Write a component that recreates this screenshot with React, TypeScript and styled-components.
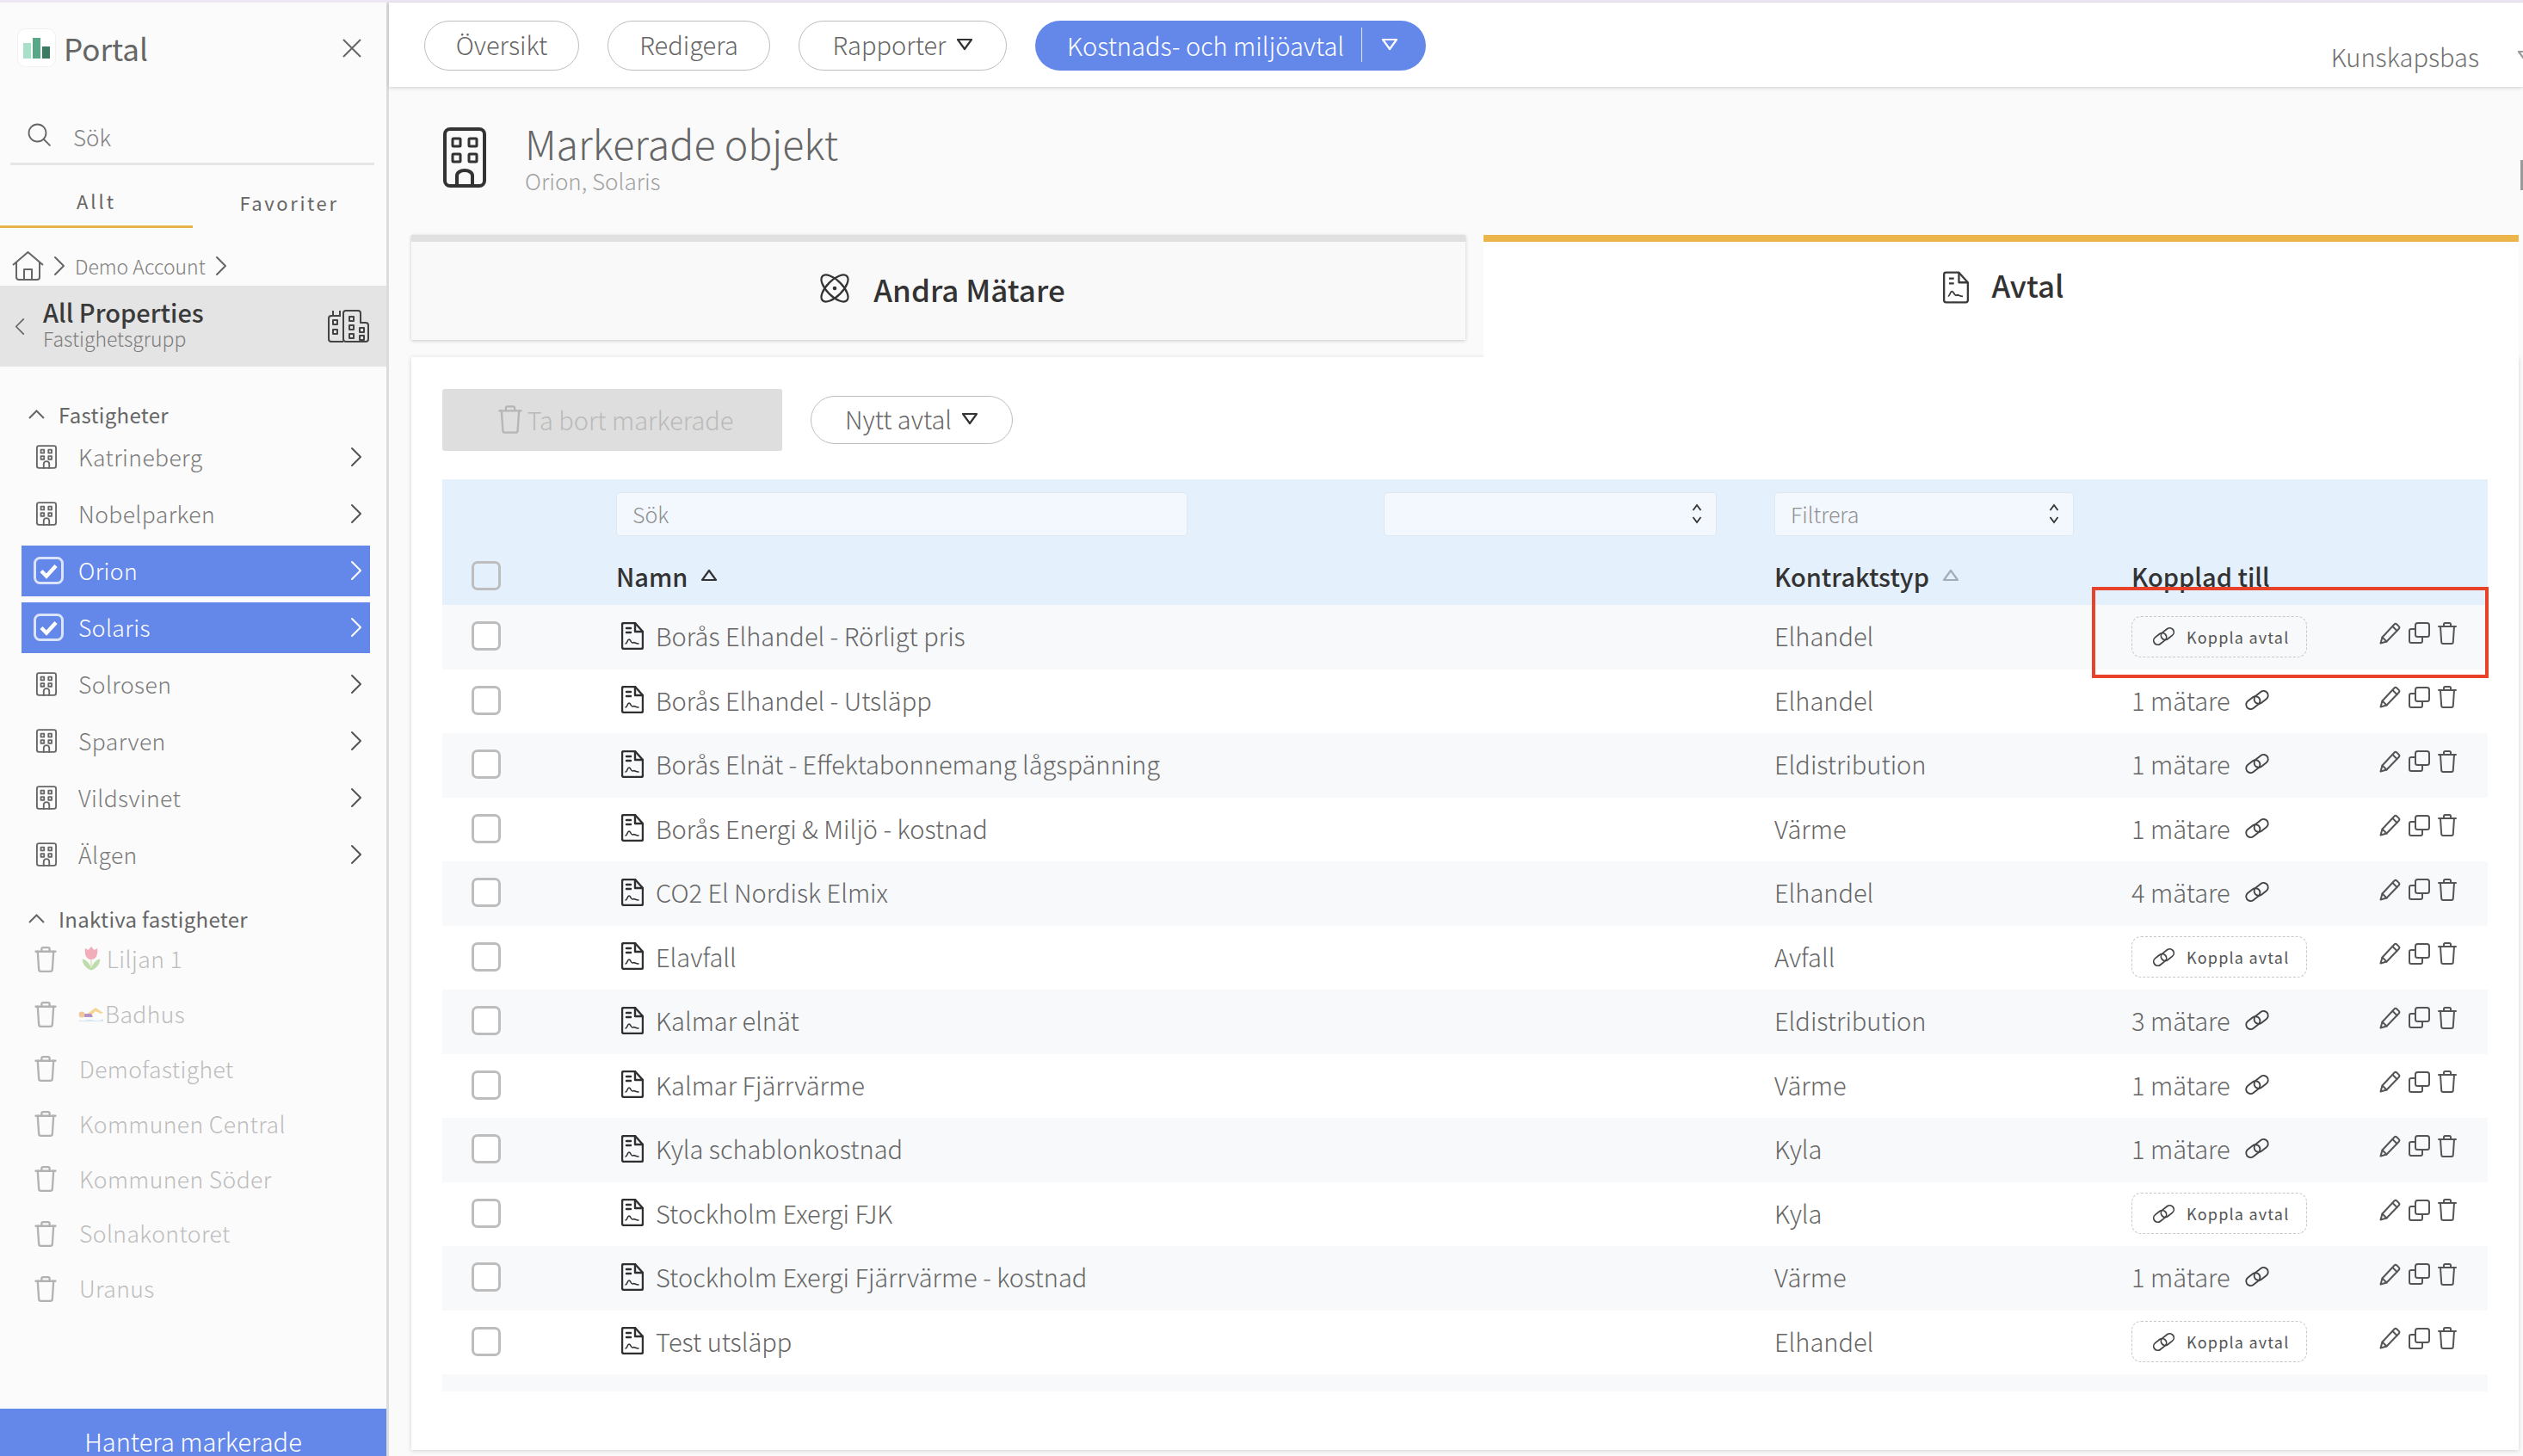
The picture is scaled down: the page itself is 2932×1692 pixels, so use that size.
import React from "react";
import styled, { createGlobalStyle } from "styled-components";

const FONT = `"Noto Sans CJK SC", "Noto Sans CJK JP", "Noto Sans", sans-serif`;

const Global = createGlobalStyle`
  html, body { margin: 0; padding: 0; background: #fafafa; }
  body { width: 2932px; height: 1692px; overflow: hidden; font-family: ${FONT}; color: #666; }
  * { box-sizing: border-box; }
`;

const Shell = styled.div`
  width: 2932px; height: 1692px; display: flex; flex-direction: column; overflow: hidden; position: relative;
`;
const TopStrip = styled.div`height: 3px; background: #ede6f3; flex: none;`;
const Body = styled.div`flex: 1; display: flex; min-height: 0;`;

/* Sidebar */
const Side = styled.aside`
  width: 452px; flex: none; background: #fbfbfb; border-right: 3px solid #dcdcdc;
  display: flex; flex-direction: column; height: 1689px;
`;
const Brand = styled.div`
  height: 87px; padding: 30px 28px 0 20px; display: flex; align-items: flex-start; justify-content: space-between;
`;
const BrandLeft = styled.div`display: flex; align-items: center; gap: 9px; font-size: 35px; line-height: 43px; color: #666; font-weight: 400;`;
const SideSearch = styled.div`
  margin: 53px 14px 0 12px; height: 49px; padding: 0 0 0 20px; border-bottom: 3px solid #e6e6e6;
  display: flex; align-items: flex-start; gap: 26px; font-size: 26px; line-height: 32px; color: #808080; font-weight: 300;
  flex: none;
`;
const Tabs = styled.div`display: flex; height: 73px; flex: none; width: 449px;`;
const SideTab = styled.div<{ $active?: boolean }>`
  width: 224px; text-align: center; font-size: 22px; letter-spacing: ${p => (p.$active ? 3 : 2.6)}px; color: #666; line-height: 26px;
  padding-top: ${p => (p.$active ? 28 : 30)}px; border-bottom: 3px solid ${p => (p.$active ? "#e5b54a" : "transparent")};
  height: 73px; font-weight: 400;
`;
const Crumb = styled.div`
  height: 67px; flex: none; padding: 20px 0 0 14px; display: flex; align-items: center; gap: 11px;
  font-size: 23px; font-weight: 300; color: #808080;
`;
const Group = styled.div`
  height: 94px; flex: none; background: #e4e4e4; display: flex; align-items: center; padding: 0 19px 0 17px;
`;
const GroupText = styled.div`margin-left: 21px; flex: 1; padding-bottom: 6px;`;
const GroupTitle = styled.div`font-size: 29px; line-height: 34px; font-weight: 500; color: #3a3a3a;`;
const GroupSub = styled.div`font-size: 23px; line-height: 28px; font-weight: 300; color: #7d7d7d;`;
const Section = styled.div<{ $top: number }>`
  margin-top: ${p => p.$top}px; padding-left: 33px; height: 34px; display: flex; align-items: center; gap: 16px;
  font-size: 24px; color: #666; flex: none; letter-spacing: .3px;
`;
const NavList = styled.div<{ $top: number }>`display: flex; flex-direction: column; flex: none; margin-top: ${p => p.$top}px;`;
const NavItem = styled.div<{ $selected?: boolean; $h: number }>`
  height: ${p => p.$h}px; margin: 0 19px 0 25px; width: 405px; flex: none; display: flex; align-items: center;
  background: ${p => (p.$selected ? "#6488ea" : "transparent")};
  color: ${p => (p.$selected ? "#fff" : "#7a7a7a")};
  font-size: 26.5px; font-weight: 300; letter-spacing: .4px;
  background-clip: content-box; padding: ${p => (p.$selected ? "3.5px 0" : "0")};
  svg.ic { margin-left: 14px; flex: none; }
`;
const BuildingSlot = styled.span`display: flex; margin-left: 3px; margin-right: 8px;`;
const NavLabel = styled.span`margin-left: 17px; flex: 1; display: flex; align-items: center; white-space: nowrap; padding-bottom: 2px;`;
const ChevSlot = styled.span`margin-right: 9px; display: flex;`;
const DeadItem = styled.div`
  height: 63.8px; width: 405px; margin-left: 25px; display: flex; align-items: center; opacity: .55;
  font-size: 26.5px; font-weight: 300; letter-spacing: .4px; color: #8a8a8a; flex: none;
  svg.ic { margin-left: 15px; flex: none; }
`;
const DeadLabel = styled(NavLabel)`margin-left: 26px;`;
const EmojiSlot = styled.span<{ $w: number; $left: number }>`display: flex; width: ${p => p.$w}px; margin-left: ${p => p.$left}px; flex: none;`;
const SideSpacer = styled.div`flex: 1;`;
const Manage = styled.div`
  height: 55px; flex: none; width: 449px; background: #6488ea; color: #fff; text-align: center;
  font-size: 29px; font-weight: 300; padding-top: 20px; line-height: 35px;
`;

/* Main */
const Main = styled.main`flex: 1; min-width: 0; display: flex; flex-direction: column; background: #fafafa; position: relative;`;
const TopBar = styled.header`
  height: 98px; flex: none; background: #fff; box-shadow: 0 1px 4px rgba(0,0,0,.18); padding: 21px 0 0 41px;
  display: flex; align-items: flex-start; gap: 33px; position: relative; z-index: 2;
`;
const Pill = styled.div<{ $w: number; $h?: number }>`
  width: ${p => p.$w}px; height: ${p => p.$h ?? 58}px; flex: none; border: 1px solid #bdbdbd; border-radius: 29px; background: #fff;
  display: flex; align-items: center; justify-content: center; gap: 11px;
  font-size: 29px; font-weight: 300; color: #666; line-height: 1; padding-bottom: 3px;
`;
const BluePill = styled.div`
  width: 454px; height: 58px; flex: none; border-radius: 29px; background: #6488ea; color: #fff;
  display: flex; align-items: center; padding-left: 37px; font-size: 29px; font-weight: 300; padding-bottom: 3px;
`;
const PillDivider = styled.span`width: 1px; height: 40px; background: #dfe7fb; margin-left: 20px; margin-right: 22px;`;
const Kb = styled.div`
  margin-left: auto; margin-top: 20px; display: flex; align-items: center; gap: 44px; font-size: 29px; font-weight: 300; color: #707070; margin-right: -13px;
`;
const Head = styled.section`
  height: 172px; flex: none; padding: 47px 0 0 63px; display: flex; align-items: flex-start; position: relative;
`;
const HeadText = styled.div`margin-left: 45px; margin-top: -10px;`;
const HeadTitle = styled.h1`margin: 0; font-size: 46.5px; line-height: 56px; font-weight: 300; color: #666;`;
const HeadSub = styled.div`font-size: 26px; line-height: 32px; font-weight: 300; color: #a0a0a0; margin-top: 0;`;
const EdgeMark = styled.div`position: absolute; right: 0; top: 85px; width: 3px; height: 35px; background: #999;`;
const TabRow = styled.div`
  height: 142px; flex: none; padding-left: 26px; display: flex; align-items: flex-start; gap: 21px; position: relative; z-index: 1;
`;
const TabLeft = styled.div`
  width: 1225px; height: 122px; background: #f9f9f9; border-top: 8px solid #e0e0e0; box-shadow: 0 1px 4px rgba(0,0,0,.2);
  display: flex; align-items: center; justify-content: center; gap: 28px; font-size: 35px; font-weight: 500; color: #333; padding-left: 10px; padding-bottom: 6px;
`;
const TabRight = styled.div`
  width: 1203px; height: 142px; background: #fff; border-top: 8px solid #ebb54a;
  display: flex; align-items: flex-start; justify-content: center; gap: 26px; font-size: 35px; font-weight: 500; color: #333;
  padding-top: 24px; padding-left: 6px;
`;
const TabIconSlot = styled.span`display: flex; margin-top: 10px;`;
const Card = styled.section`
  width: 2449px; margin-left: 26px; height: 1270px; flex: none; background: #fff; box-shadow: 0 1px 5px rgba(0,0,0,.16);
  padding: 37px 36px 0 36px; display: flex; flex-direction: column;
`;
const Actions = styled.div`display: flex; align-items: center; gap: 33px; height: 72px; flex: none;`;
const DelBtn = styled.div`
  width: 395px; height: 72px; background: #dedede; border-radius: 3px; color: #bababa; font-size: 29px; font-weight: 300;
  display: flex; align-items: center; justify-content: center; gap: 6px; padding-left: 8px; padding-bottom: 2px;
`;
const TableWrap = styled.div`margin-top: 33px; position: relative; flex: none; width: 2377px;`;
const THead = styled.div`height: 146px; background: #e5f0fd; padding-top: 15px; flex: none;`;
const FilterRow = styled.div`display: grid; grid-template-columns: 202px 664px 228px 387px 67px 348px; height: 51px;`;
const Field = styled.div<{ $col: number }>`
  grid-column: ${p => p.$col}; background: #f3f8fe; border: 1px solid #dfe7f0; border-radius: 4px; color: #909090;
  font-size: 25px; font-weight: 300; display: flex; align-items: center; justify-content: space-between; padding: 0 16px 2px 18px;
`;
const LabelRow = styled.div`
  display: grid; grid-template-columns: 202px 1346px 415px 414px; height: 80px; align-items: center;
  font-size: 29px; font-weight: 500; color: #333;
`;
const Label = styled.div`display: flex; align-items: center; gap: 15px; padding-top: 11px;`;
const Check = styled.div`
  width: 34px; height: 34px; border: 3px solid #bdbdbd; border-radius: 7px; margin-left: 34px; background: #fff;
`;
const CheckHead = styled(Check)`margin-top: 12px; background: transparent;`;
const TBody = styled.div`height: 914px; overflow: hidden;`;
const Row = styled.div<{ $odd: boolean }>`
  height: 74.5px; display: grid; grid-template-columns: 202px 1346px 415px 288px 126px; align-items: center;
  background: ${p => (p.$odd ? "#f8f9fb" : "#fff")}; font-size: 29px; font-weight: 300; color: #666;
`;
const RowCheck = styled(Check)`margin-top: -2px;`;
const PeekCheck = styled(Check)`margin-top: 41px;`;
const NameCell = styled.div`display: flex; align-items: center; gap: 14px; padding-left: 6px; white-space: nowrap; line-height: 1; padding-bottom: 3px;`;
const TypeCell = styled.div`line-height: 1; padding-bottom: 3px;`;
const MeterCell = styled.div`display: flex; align-items: center; gap: 16px; line-height: 1; padding-bottom: 3px;`;
const KopplaBtn = styled.div`
  width: 204px; height: 48px; border: 1px dashed #c8c8c8; border-radius: 11px; display: flex; align-items: center; padding-left: 23px; gap: 13px;
  font-size: 18px; font-weight: 400; letter-spacing: 1.2px; color: #555; margin-top: -1px;
`;
const RowTools = styled.div`display: flex; align-items: center; gap: 9px; margin-top: -9px;`;
const RedBox = styled.div`
  position: absolute; left: 1917px; top: 125px; width: 461px; height: 106px; border: 4px solid #e8432a; pointer-events: none;
`;

/* Icons */
const I = ({ w, h, vb, c = "#555", sw = 2, children, fill = "none" }: any) => (
  <svg className="ic" width={w} height={h} viewBox={vb} fill={fill} stroke={c} strokeWidth={sw} strokeLinecap="round" strokeLinejoin="round">{children}</svg>
);
const Chev = ({ dir = "r", c = "#666", w = 14, h = 24, sw = 2 }: any) => {
  const d = dir === "r" ? "M2 2l10 10-10 10" : "M12 2L2 12l10 10";
  return <I w={w} h={h} vb="0 0 14 24" c={c} sw={sw}><path d={d} /></I>;
};
const ChevUp = () => <svg width="19" height="11" viewBox="0 0 19 11" fill="none" stroke="#666" strokeWidth="2"><path d="M1 10l8.5-8.5L18 10" /></svg>;
const Tri = ({ c = "#333", up = false, w = 20, h = 15 }: any) => (
  <svg width={w} height={h} viewBox="0 0 20 15" fill="none" stroke={c} strokeWidth="2.2" strokeLinejoin="round">
    {up ? <path d="M10 2L18 13H2z" /> : <path d="M2 2h16l-8 11z" />}
  </svg>
);
const Building = ({ c = "#666" }: any) => (
  <I w={24} h={28} vb="0 0 26 30" c={c}>
    <rect x="1" y="1" width="24" height="28" rx="2.5" />
    <rect x="6" y="6" width="4" height="4" /><rect x="15.5" y="6" width="4" height="4" />
    <rect x="6" y="14" width="4" height="4" /><rect x="15.5" y="14" width="4" height="4" />
    <path d="M9.5 29v-5a3.5 3.5 0 017 0v5" />
  </I>
);
const Trash = ({ c = "#555", w = 22, h = 26, sw = 2 }: any) => (
  <I w={w} h={h} vb="0 0 22 26" c={c} sw={sw}>
    <path d="M1 5h20" /><path d="M7 5V2.5A1.5 1.5 0 018.5 1h5A1.5 1.5 0 0115 2.5V5" />
    <path d="M3 5l1.2 18a2 2 0 002 2h9.6a2 2 0 002-2L19 5" />
  </I>
);
const Pencil = () => (
  <I w={25} h={26} vb="0 0 25 26" c="#555">
    <path d="M1.5 24.5l2-7L17.5 2.5a2 2 0 012.8 0l2.4 2.4a2 2 0 010 2.8L8.5 22.5z" /><path d="M15.5 5l5 5" /><path d="M3.5 17.5l5 5" />
  </I>
);
const Copy = () => (
  <I w={25} h={25} vb="0 0 25 25" c="#555">
    <rect x="8" y="1" width="16" height="16" rx="2.5" />
    <path d="M8 8H3a2 2 0 00-2 2v12a2 2 0 002 2h11a2 2 0 002-2v-5" />
  </I>
);
const LinkIc = ({ w = 30, h = 25 }: any) => (
  <I w={w} h={h} vb="0 0 28 24" c="#444" sw={1.8}>
    <rect x="-8.5" y="-5" width="17" height="10" rx="5" transform="translate(9.5 15) rotate(-38)" />
    <rect x="-8.5" y="-5" width="17" height="10" rx="5" transform="translate(18.5 9) rotate(-38)" />
  </I>
);
const DocShapes = () => (
  <>
    <path d="M3 1h13l9 10v18a2 2 0 01-2 2H3a2 2 0 01-2-2V3a2 2 0 012-2z" />
    <path d="M16 1v10h9" /><path d="M6 7h5M6 12h5" />
    <path d="M5 25c2 0 2-5 4-5s2 4 4 4 1-1 3 0 3 1 4 1" strokeWidth="1.6" />
  </>
);
const Doc = () => <I w={26} h={32} vb="0 0 26 32" c="#2f2f2f" sw={2.4}><DocShapes /></I>;
const Updown = () => (
  <svg width="12" height="24" viewBox="0 0 12 24" fill="none" stroke="#333" strokeWidth="1.8"><path d="M1.5 8L6 2l4.5 6M1.5 16L6 22l4.5-6" /></svg>
);
const SelCheck = () => (
  <svg className="ic" width="35" height="32" viewBox="0 0 35 32" fill="none">
    <rect x="1.5" y="1.5" width="32" height="29" rx="6" stroke="#dbe3fb" strokeWidth="3" />
    <path d="M9 16.5l6 6 11-12" stroke="#fff" strokeWidth="4.4" />
  </svg>
);
const Tulip = () => (
  <svg width="24" height="30" viewBox="0 0 24 30">
    <path d="M12 14v14M12 28C6 26 3 22 2 16c5 1 8 5 10 12zM12 28c6-2 9-6 10-12-5 1-8 5-10 12z" fill="#8cc46a" stroke="#8cc46a" />
    <path d="M5 3l3.5 2L12 1l3.5 4L19 3c1 7-1 13-7 13S4 10 5 3z" fill="#ee6f86" />
  </svg>
);
const Swimmer = () => (
  <svg width="30" height="22" viewBox="0 0 30 22">
    <path d="M1 18c6 3 8-1 14 0s8 2 14-1v3H1z" fill="#bcd7f5" />
    <path d="M8 13L20 4l9 6-3 1-6-3-6 6z" fill="#f4b83f" />
    <path d="M5 11h10l2 4H7z" fill="#7a3fa0" />
    <circle cx="4" cy="12" r="3.4" fill="#e7a04f" />
  </svg>
);

const active = ["Katrineberg", "Nobelparken", "Orion", "Solaris", "Solrosen", "Sparven", "Vildsvinet", "Älgen"];
const inactive = ["Liljan 1", "Badhus", "Demofastighet", "Kommunen Central", "Kommunen Söder", "Solnakontoret", "Uranus"];
const rows: [string, string, number][] = [
  ["Borås Elhandel - Rörligt pris", "Elhandel", 0],
  ["Borås Elhandel - Utsläpp", "Elhandel", 1],
  ["Borås Elnät - Effektabonnemang lågspänning", "Eldistribution", 1],
  ["Borås Energi & Miljö - kostnad", "Värme", 1],
  ["CO2 El Nordisk Elmix", "Elhandel", 4],
  ["Elavfall", "Avfall", 0],
  ["Kalmar elnät", "Eldistribution", 3],
  ["Kalmar Fjärrvärme", "Värme", 1],
  ["Kyla schablonkostnad", "Kyla", 1],
  ["Stockholm Exergi FJK", "Kyla", 0],
  ["Stockholm Exergi Fjärrvärme - kostnad", "Värme", 1],
  ["Test utsläpp", "Elhandel", 0],
];

export default function App() {
  return (
    <Shell>
      <Global />
      <TopStrip />
      <Body>
        <Side>
          <Brand>
            <BrandLeft>
              <svg width="45" height="45" viewBox="0 0 45 45">
                <rect x=".5" y=".5" width="44" height="44" rx="9" fill="#fff" stroke="#f0f0f0" />
                <rect x="7" y="17" width="9" height="18" fill="#a9e0ca" />
                <rect x="18" y="11" width="9" height="24" fill="#58a888" />
                <rect x="29" y="21" width="9" height="14" fill="#3b7b62" />
              </svg>
              Portal
            </BrandLeft>
            <svg width="24" height="24" viewBox="0 0 24 24" fill="none" stroke="#666" strokeWidth="2" style={{ marginTop: 11 }}><path d="M2 2l20 20M22 2L2 22" /></svg>
          </Brand>
          <SideSearch>
            <svg width="27" height="27" viewBox="0 0 27 27" fill="none" stroke="#666" strokeWidth="1.8"><circle cx="11.5" cy="11.5" r="10" /><path d="M18.5 18.5l8 8" /></svg>
            Sök
          </SideSearch>
          <Tabs>
            <SideTab $active>Allt</SideTab>
            <SideTab>Favoriter</SideTab>
          </Tabs>
          <Crumb>
            <svg width="37" height="34" viewBox="0 0 37 34" fill="none" stroke="#666" strokeWidth="2" strokeLinejoin="round"><path d="M1 16L18.5 1 36 16" /><path d="M5 13v17a3 3 0 003 3h21a3 3 0 003-3V13" /><path d="M14 33V21h9v12" /></svg>
            <Chev />
            <span>Demo Account</span>
            <Chev />
          </Crumb>
          <Group>
            <Chev dir="l" w={12} h={21} />
            <GroupText>
              <GroupTitle>All Properties</GroupTitle>
              <GroupSub>Fastighetsgrupp</GroupSub>
            </GroupText>
            <svg width="50" height="40" viewBox="0 0 50 40" fill="none" stroke="#444" strokeWidth="2" strokeLinejoin="round">
              <path d="M19 38H5a3 3 0 01-3-3V11a3 3 0 013-3h11" /><path d="M7 8V2M15 8V2" />
              <rect x="7" y="13" width="5" height="5" /><rect x="7" y="24" width="5" height="5" />
              <path d="M19 5a3 3 0 013-3h14a3 3 0 013 3v11h6a3 3 0 013 3v16a3 3 0 01-3 3H22a3 3 0 01-3-3z" />
              <rect x="26" y="9" width="5" height="5" /><rect x="26" y="19" width="5" height="5" /><rect x="26" y="29" width="5" height="5" />
              <rect x="38" y="22" width="5" height="5" /><rect x="38" y="31" width="5" height="5" />
            </svg>
          </Group>
          <Section $top={38}><ChevUp />Fastigheter</Section>
          <NavList $top={0}>
            {active.map(n => {
              const sel = n === "Orion" || n === "Solaris";
              return (
                <NavItem key={n} $selected={sel} $h={66}>
                  {sel ? <SelCheck /> : <BuildingSlot><Building /></BuildingSlot>}
                  <NavLabel>{n}</NavLabel>
                  <ChevSlot><Chev c={sel ? "#fff" : "#555"} /></ChevSlot>
                </NavItem>
              );
            })}
          </NavList>
          <Section $top={24}><ChevUp />Inaktiva fastigheter</Section>
          <NavList $top={-1}>
            {inactive.map(n => (
              <DeadItem key={n}>
                <Trash c="#777" w={26} h={30} />
                <DeadLabel>
                  {n === "Liljan 1" && <EmojiSlot $w={30} $left={2}><Tulip /></EmojiSlot>}
                  {n === "Badhus" && <EmojiSlot $w={31} $left={-1}><Swimmer /></EmojiSlot>}
                  {n}
                </DeadLabel>
              </DeadItem>
            ))}
          </NavList>
          <SideSpacer />
          <Manage>Hantera markerade</Manage>
        </Side>
        <Main>
          <TopBar>
            <Pill $w={180}>Översikt</Pill>
            <Pill $w={189}>Redigera</Pill>
            <Pill $w={242}>Rapporter <Tri /></Pill>
            <BluePill>Kostnads- och miljöavtal<PillDivider /><Tri c="#fff" /></BluePill>
            <Kb>Kunskapsbas <Tri c="#999" /></Kb>
          </TopBar>
          <Head>
            <svg width="50" height="70" viewBox="0 0 50 70" fill="none" stroke="#333" strokeWidth="4">
              <rect x="2" y="2" width="46" height="66" rx="6" />
              <rect x="11" y="13" width="9" height="9" strokeWidth="3" rx="1" /><rect x="30" y="13" width="9" height="9" strokeWidth="3" rx="1" />
              <rect x="11" y="31" width="9" height="9" strokeWidth="3" rx="1" /><rect x="30" y="31" width="9" height="9" strokeWidth="3" rx="1" />
              <path d="M16 68V56a9 6 0 0118 0v12" />
            </svg>
            <HeadText>
              <HeadTitle>Markerade objekt</HeadTitle>
              <HeadSub>Orion, Solaris</HeadSub>
            </HeadText>
            <EdgeMark />
          </Head>
          <TabRow>
            <TabLeft>
              <svg width="34" height="34" viewBox="0 0 34 34" fill="none" stroke="#333" strokeWidth="2.2">
                <ellipse cx="17" cy="17" rx="9" ry="20" transform="rotate(45 17 17)" />
                <ellipse cx="17" cy="17" rx="9" ry="20" transform="rotate(-45 17 17)" />
                <circle cx="17" cy="17" r="1.2" fill="#333" />
              </svg>
              Andra Mätare
            </TabLeft>
            <TabRight>
              <TabIconSlot>
                <svg width="30" height="38" viewBox="0 0 26 32" fill="none" stroke="#3a3a3a" strokeWidth="2" strokeLinejoin="round"><DocShapes /></svg>
              </TabIconSlot>
              Avtal
            </TabRight>
          </TabRow>
          <Card>
            <Actions>
              <DelBtn><Trash c="#b5b5b5" w={28} h={33} sw={1.8} />Ta bort markerade</DelBtn>
              <Pill $w={235} $h={56}>Nytt avtal <Tri /></Pill>
            </Actions>
            <TableWrap>
              <THead>
                <FilterRow>
                  <Field $col={2}>Sök</Field>
                  <Field $col={4}><span /><Updown /></Field>
                  <Field $col={6}>Filtrera<Updown /></Field>
                </FilterRow>
                <LabelRow>
                  <CheckHead />
                  <Label>Namn <Tri up c="#333" /></Label>
                  <Label>Kontraktstyp <Tri up c="#a3adb8" /></Label>
                  <Label>Kopplad till</Label>
                </LabelRow>
              </THead>
              <TBody>
                {rows.map(([name, type, count], i) => (
                  <Row key={name} $odd={i % 2 === 0}>
                    <RowCheck />
                    <NameCell><Doc />{name}</NameCell>
                    <TypeCell>{type}</TypeCell>
                    {count > 0 ? (
                      <MeterCell>{count} mätare <LinkIc /></MeterCell>
                    ) : (
                      <KopplaBtn><LinkIc w={27} h={23} />Koppla avtal</KopplaBtn>
                    )}
                    <RowTools><Pencil /><Copy /><Trash /></RowTools>
                  </Row>
                ))}
                <Row $odd><PeekCheck /></Row>
              </TBody>
              <RedBox />
            </TableWrap>
          </Card>
        </Main>
      </Body>
    </Shell>
  );
}
